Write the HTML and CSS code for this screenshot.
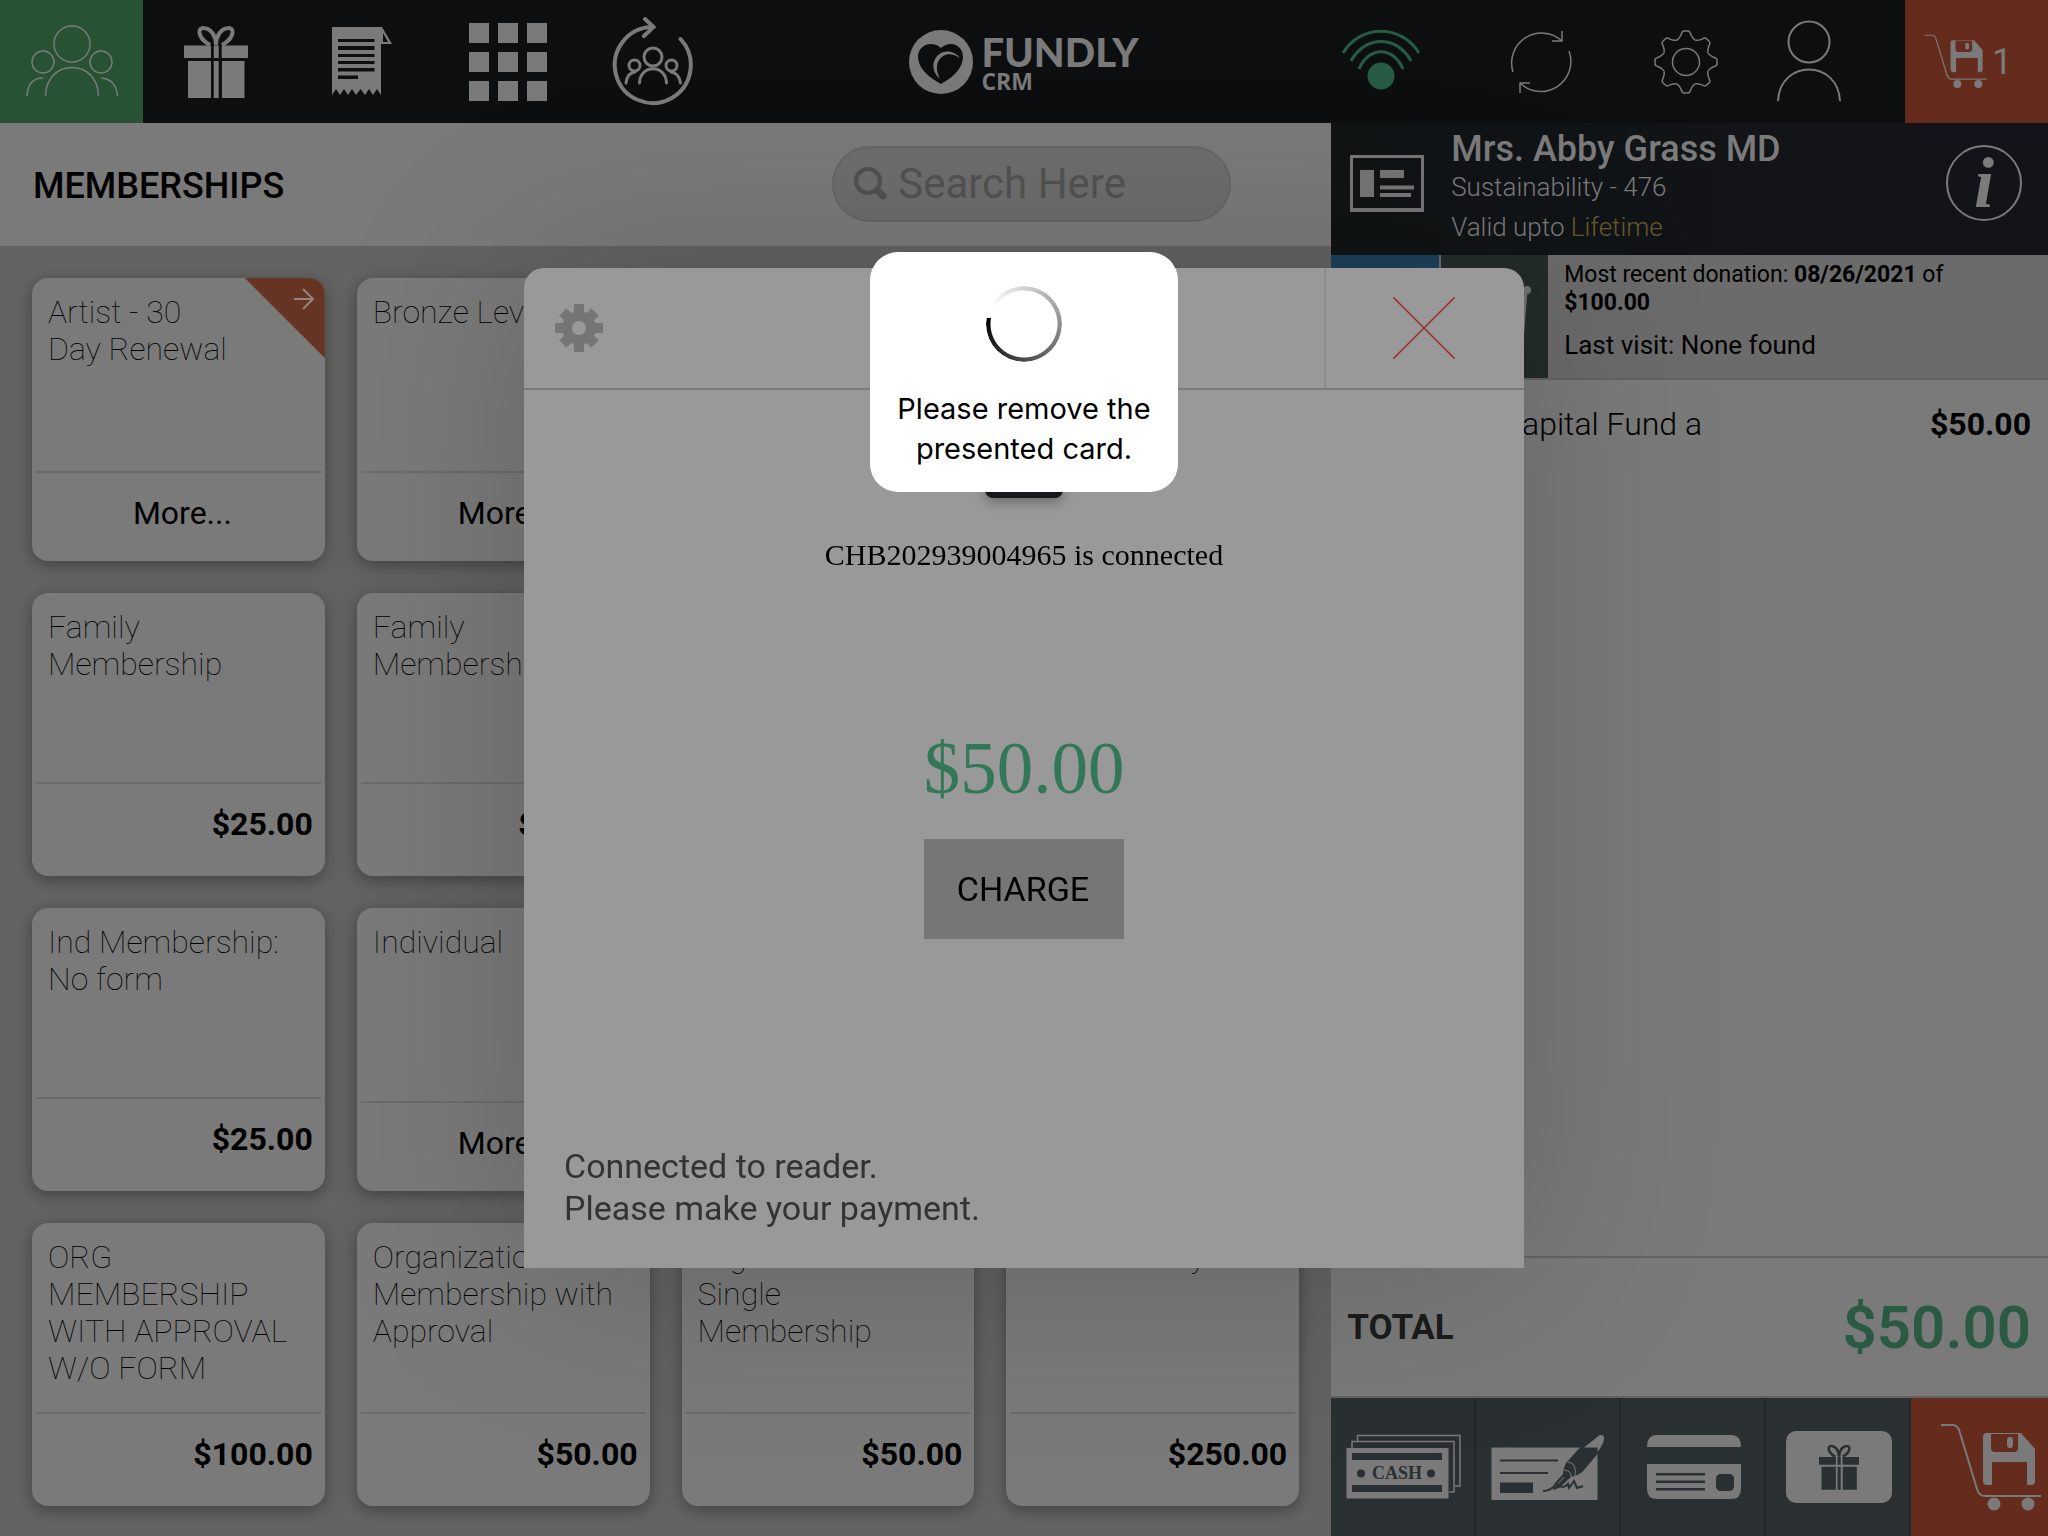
FILE: index.html
```html
<!DOCTYPE html>
<html lang="en">
<head>
<meta charset="utf-8">
<title>Fundly CRM - Memberships</title>
<link rel="stylesheet" href="styles.css">
</head>
<body>
<svg class="defs" aria-hidden="true">
  <symbol id="gift" viewBox="185 24 64 73">
    <path fill="currentColor" d="M185 44.500h27V57h-27zM214.700 44.500h5V57h-5zM222.700 44.500H249V57h-26.300zM189 60h23v37h-23zM214.700 60h5v37h-5zM223 60h22.500v37H223z"/>
    <path fill="none" stroke="currentColor" stroke-width="4" d="M211 44C197 36 199 26 205 27C213 28 217 36 217 44C217 36 221 28 229 27C235 26 237 36 223 44"/>
  </symbol>
  <symbol id="cart" viewBox="1941 1422 102 89">
    <path fill="none" stroke="currentColor" stroke-width="2" d="M1942 1424H1954Q1959 1424 1961 1432L1978 1488Q1980 1495 1986 1495H2042"/>
    <circle fill="currentColor" cx="1995" cy="1503" r="6.500"/><circle fill="currentColor" cx="2029" cy="1503" r="6.500"/>
    <path fill="currentColor" fill-rule="evenodd" d="M1988 1432H2022L2036 1448V1480Q2036 1484 2032 1484H2028V1461H1993V1484H1988Q1984 1484 1984 1480V1436Q1984 1432 1988 1432ZM1992 1433V1447Q1992 1451 1996 1451H2015Q2019 1451 2019 1447V1433Z"/>
    <rect fill="currentColor" x="2008" y="1436" width="6" height="11" rx="3"/>
  </symbol>
</svg>

<header class="topbar">
  <nav class="nav-left" aria-label="Main">
    <button class="nav-button active" aria-label="Members">
      <svg width="143" height="123" viewBox="0 0 143 123" class="line"><circle cx="72" cy="44" r="18"/><circle cx="43" cy="62" r="11"/><circle cx="101" cy="62" r="11"/><path d="M45.500 96C46 58 98 58 98.500 96M27 96Q28 78 43 78M101 78Q116 79 117.500 96"/></svg>
    </button>
    <button class="nav-button" aria-label="Gifts"><svg width="64" height="73"><use href="#gift"/></svg></button>
    <button class="nav-button" aria-label="Receipts">
      <svg width="60" height="70" viewBox="333 27 60 70"><path fill="currentColor" fill-rule="evenodd" d="M333 27H383L393 44H382V95L378 89L374 95L370 89L366 95L361.500 89L357 95L353 89L349 95L345 89L341 95L337 89L333 95ZM384 33V42H389ZM339 39V42H375.500V39ZM339 46V50H375.500V46ZM339 54V57H375.500V54ZM339 61V64H375.500V61ZM339 68V71.500H375.500V68ZM339 75.500V79H359V75.500Z"/></svg>
    </button>
    <button class="nav-button" aria-label="Categories">
      <svg width="78" height="78" viewBox="0 0 78 78"><path fill="currentColor" d="M0 0h20v20H0zM29 0h20v20H29zM58 0h20v20H58zM0 29h20v20H0zM29 29h20v20H29zM58 29h20v20H58zM0 58h20v20H0zM29 58h20v20H29zM58 58h20v20H58z"/></svg>
    </button>
    <button class="nav-button" aria-label="Renewals">
      <svg width="84" height="123" viewBox="612 0 84 123" class="line bold"><path d="M680.500 39A38 38 0 1 1 652 27M645 19L653.500 27L644 36"/><g stroke-width="3"><circle cx="653" cy="57" r="9"/><circle cx="634.500" cy="65.500" r="5.500"/><circle cx="671.500" cy="65.500" r="5.500"/><path d="M639.500 83C640 64 666 64 666.500 83M626 83Q627 73 635 72M671 72Q679 73 680.500 83"/></g></svg>
    </button>
  </nav>
  <div class="logo">
    <svg width="64" height="64" viewBox="0 0 64 64"><circle cx="32" cy="32" r="32" fill="#7a7a7a"/><path fill="#0c0e10" d="M32 18C24 10 9 14 9 27C10 41 22 48 32 54C42 48 53 41 54 27C54 14 40 10 32 18Z"/><path fill="#7a7a7a" d="M51 28C46 21 36 19 29 25C22 32 23 42 31 49C26 39 27 31 34 26C39 23 45 24 51 28Z"/></svg>
    <div class="logo-text"><span class="logo-name">FUNDLY</span><span class="logo-sub">CRM</span></div>
  </div>
  <div class="nav-right">
    <button class="nav-button wide" aria-label="Connection">
      <svg width="80" height="123" viewBox="1341 0 80 123"><circle cx="1381" cy="76" r="13.500" fill="#255c43"/><path fill="none" stroke="#255c43" stroke-width="3" d="M1343 53C1361 24 1401 24 1419 53M1351 61C1365 35 1397 35 1411 61M1359 69C1369 46 1393 46 1403 69"/></svg>
    </button>
    <button class="nav-button wide" aria-label="Sync">
      <svg width="64" height="123" viewBox="1509 0 64 123" class="line"><path d="M1513 72A30 30 0 0 1 1562 41M1562 31V41H1552M1569 51A30 30 0 0 1 1520 83M1520 93V83H1530"/></svg>
    </button>
    <button class="nav-button gear" aria-label="Settings">
      <svg width="66" height="66" viewBox="-33 -33 66 66" class="line"><circle r="13.500"/><path id="tooth" d="M-9-22Q-7-23-5-27Q-4-31-2-31H2Q4-31 5-27Q7-23 9-22"/><use href="#tooth" transform="rotate(45)"/><use href="#tooth" transform="rotate(90)"/><use href="#tooth" transform="rotate(135)"/><use href="#tooth" transform="rotate(180)"/><use href="#tooth" transform="rotate(225)"/><use href="#tooth" transform="rotate(270)"/><use href="#tooth" transform="rotate(315)"/></svg>
    </button>
    <button class="nav-button user" aria-label="Account">
      <svg width="66" height="123" viewBox="1776 0 66 123" class="line user-line"><circle cx="1809" cy="42" r="20.500"/><path d="M1778 101C1780 59 1838 59 1840 101"/></svg>
    </button>
    <button class="cart-button" aria-label="Cart, 1 item"><svg width="63" height="55"><use href="#cart"/></svg><span>1</span></button>
  </div>
</header>

<main class="content">
  <section class="catalog">
    <div class="catalog-head">
      <h1>MEMBERSHIPS</h1>
      <label class="search">
        <svg width="36" height="36" viewBox="0 0 36 36" fill="none" stroke="#51514f" aria-hidden="true"><circle cx="15" cy="15" r="12" stroke-width="4"/><path d="M24 24L30 30" stroke-width="7" stroke-linecap="round"/></svg>
        <input type="search" placeholder="Search Here" aria-label="Search Here">
      </label>
    </div>
    <div class="cards">
      <article class="card first renewal"><h2>Artist - 30 Day Renewal</h2><span class="ribbon"><svg width="22" height="24" viewBox="0 0 22 24" fill="none" stroke="#93857d" stroke-width="2"><path d="M1 12H20M10 2L20 12L10 22"/></svg></span><button class="more">More...</button></article>
      <article class="card"><h2>Bronze Level</h2><button class="more">More...</button></article>
      <article class="card first"><h2>Family Membership</h2><p class="price">$25.00</p></article>
      <article class="card"><h2>Family Membership</h2><p class="price">$100.00</p></article>
      <article class="card first"><h2>Ind Membership: No form</h2><p class="price">$25.00</p></article>
      <article class="card"><h2>Individual</h2><button class="more">More...</button></article>
      <article class="card first"><h2>ORG MEMBERSHIP WITH APPROVAL W/O FORM</h2><p class="price">$100.00</p></article>
      <article class="card"><h2>Organization Membership with Approval</h2><p class="price">$50.00</p></article>
      <article class="card"><h2>Organization Single Membership</h2><p class="price">$50.00</p></article>
      <article class="card"><h2>Sustainability</h2><p class="price">$250.00</p></article>
    </div>
  </section>

  <aside class="order">
    <div class="customer">
      <svg width="74" height="57" viewBox="1350 154 74 57"><path fill="#767676" fill-rule="evenodd" d="M1350 154H1424V211H1350ZM1353 157V207H1421V157ZM1360 169H1374V196H1360ZM1380 169H1404V177H1380ZM1380 184.500H1414V188.500H1380ZM1380 192H1411V196H1380Z"/></svg>
      <div class="customer-text">
        <p class="name">Mrs. Abby Grass MD</p>
        <p class="level">Sustainability - 476</p>
        <p class="valid">Valid upto <span>Lifetime</span></p>
      </div>
      <button class="info" aria-label="Customer information">i</button>
    </div>
    <div class="history">
      <div class="tab-blue"></div>
      <div class="tab-slate"><svg width="26" height="50" viewBox="0 0 26 50"><path d="M4 6H20L17 46H6Z" fill="none" stroke="#6f7272" stroke-width="3"/><circle cx="21" cy="6" r="4" fill="#6f7272"/></svg></div>
      <div class="history-text"><p>Most recent donation: <b>08/26/2021</b> of <b>$100.00</b></p><p class="visit">Last visit: None found</p></div>
    </div>
    <div class="items"><div class="item"><span>Capital Fund a</span><b>$50.00</b></div></div>
    <div class="total"><span>TOTAL</span><strong>$50.00</strong></div>
    <div class="payments">
      <button aria-label="Cash">
        <svg width="115" height="66" viewBox="1346 1434 115 66"><path fill="none" stroke="currentColor" stroke-width="1.500" d="M1352 1448V1441.500H1454V1492H1449M1357.500 1441V1435.500H1460V1486H1455"/><path fill="currentColor" d="M1346.500 1448h102v50.500h-102z"/><path fill="#2a2f32" d="M1352 1453h90v7h-90zM1352 1485h90v7h-90z"/><circle cx="1361" cy="1473.500" r="4" fill="#2a2f32"/><circle cx="1431" cy="1473.500" r="4" fill="#2a2f32"/><text x="1397" y="1479" text-anchor="middle" class="cash-text">CASH</text></svg>
      </button>
      <button aria-label="Check">
        <svg width="115" height="68" viewBox="1492 1433 115 68"><path fill="currentColor" d="M1492.500 1447.500h106V1500h-106z"/><path fill="#2a2f32" d="M1501 1459.500h58v2h-58zM1501 1472h48v2h-48zM1501 1482.500h33v10.500h-33z"/><path fill="#2a2f32" d="M1598 1436Q1604 1431 1606 1438Q1606 1444 1601 1451L1585 1470Q1581 1475 1572 1477L1560 1488L1554 1490L1556 1483L1564 1474Q1564 1468 1568 1462L1585 1443Z"/><path fill="currentColor" d="M1597 1438Q1602 1432 1605 1437Q1606 1442 1598.500 1452V1447.500H1585Z"/><path fill="none" stroke="currentColor" stroke-width="1" d="M1569 1462Q1578 1463 1576 1476M1565 1470Q1573 1471 1572 1477M1556 1487L1565 1477"/><path fill="none" stroke="#2a2f32" stroke-width="2" d="M1544 1491Q1552 1491 1557 1484Q1564 1490 1569 1484L1570 1488L1575 1481L1578 1488L1584 1486"/></svg>
      </button>
      <button aria-label="Credit card">
        <svg width="94" height="64" viewBox="0 0 94 64"><path fill="currentColor" fill-rule="evenodd" d="M10 0H84Q94 0 94 12H0Q0 0 10 0ZM0 29H94V54Q94 64 84 64H10Q0 64 0 54ZM9 38V40.500H58V38ZM9 45.500V48H58V45.500ZM9 53V55.500H58V53ZM74 39Q69 39 69 44V51Q69 56 74 56H82Q87 56 87 51V44Q87 39 82 39Z"/></svg>
      </button>
      <button aria-label="Gift card"><span class="gift-card"><svg width="40" height="46"><use href="#gift"/></svg></span></button>
      <button class="checkout" aria-label="Save cart"><svg width="102" height="89"><use href="#cart"/></svg></button>
    </div>
  </aside>
</main>

<div class="overlay">
  <div class="modal" role="dialog" aria-label="Card payment">
    <div class="modal-head">
      <button class="reader-settings" aria-label="Reader settings">
        <svg width="48" height="48" viewBox="-24 -24 48 48"><path fill="#757575" fill-rule="evenodd" d="M-17 0a17 17 0 1 0 34 0a17 17 0 1 0-34 0M-7 0a7 7 0 1 0 14 0a7 7 0 1 0-14 0"/><g fill="none" stroke="#757575" stroke-width="10" stroke-linecap="butt"><path d="M0-24V-13M0 24V13M-24 0H-13M24 0H13M-16-16L-9-9M16-16L9-9M-16 16L-9 9M16 16L9 9"/></g></svg>
      </button>
      <button class="close" aria-label="Close"><svg width="62" height="62" viewBox="0 0 62 62" fill="none" stroke="#952c24" stroke-width="1.500"><path d="M0 0L62 62M62 0L0 62"/></svg></button>
    </div>
    <div class="modal-body">
      <div class="reader"></div>
      <p class="reader-name">CHB202939004965 is connected</p>
      <p class="amount">$50.00</p>
      <button class="charge">CHARGE</button>
      <p class="status">Connected to reader.<br>Please make your payment.</p>
    </div>
  </div>
  <div class="toast" role="status"><div class="spinner"></div><p>Please remove the presented card.</p></div>
</div>
</body>
</html>
```
FILE: styles.css
```css
* { box-sizing: border-box; }
body { margin: 0; height: 100vh; overflow: hidden; display: flex; flex-direction: column; background: #636363; font-family: Roboto, "Liberation Sans", sans-serif; color: #000; }
h1, h2, p { margin: 0; }
button { border: 0; padding: 0; background: none; font: inherit; color: inherit; }
svg { display: block; }
.defs { position: absolute; width: 0; height: 0; }
.line { fill: none; stroke: #7a7a7a; stroke-width: 1.5; }
.line.bold { stroke-width: 4; stroke-linecap: round; }
.user-line { stroke-width: 2; }

.topbar { flex: none; height: 123px; display: grid; grid-template-columns: 1fr auto 1fr; background: #0c0e10; color: #7a7a7a; }
.nav-left, .nav-right { display: flex; }
.nav-right { justify-content: flex-end; }
.nav-button { width: 146px; display: flex; align-items: center; justify-content: center; }
.nav-button.active { width: 143px; background: #275233; }
.nav-button.wide { width: 160px; }
.nav-button.gear { width: 130px; }
.nav-button.user { width: 116px; margin-right: 38px; }
.cart-button { width: 143px; display: flex; align-items: center; gap: 5px; padding-left: 19px; background: #652b1d; font-size: 36px; font-weight: 400; }
.logo { display: flex; align-items: center; gap: 8px; }
.logo-text { display: flex; flex-direction: column; }
.logo-name { font: 900 40px/38px Lato, sans-serif; }
.logo-sub { font: 700 23px/20px "Open Sans", sans-serif; }

.content { flex: 1; min-height: 0; display: flex; }
.catalog { flex: 1; min-width: 0; }
.catalog-head { height: 123px; display: flex; align-items: center; justify-content: space-between; padding: 0 100px 0 33px; background: #7a7a7a; }
h1 { padding-top: 2px; font-size: 36px; font-weight: 500; }
.search { width: 399px; height: 76px; display: flex; align-items: center; gap: 9px; margin-bottom: 2px; padding-left: 19px; border: 2px solid #666665; border-radius: 38px; background: #6d6d6d; }
.search input { flex: 1; min-width: 0; border: 0; padding: 0; background: none; font: 400 42px Roboto, sans-serif; }
.search input::placeholder { color: #525351; opacity: 1; }
.cards { display: grid; grid-template-columns: repeat(4, 1fr); grid-auto-rows: 283px; gap: 32px; padding: 32px; }
.card { position: relative; display: flex; flex-direction: column; border-radius: 16px; background: #7a7a7a; box-shadow: 0 4px 16px rgba(0, 0, 0, .35); }
.card.first { grid-column: 1; }
.card h2 { flex: 1; padding: 16px 16px 0; font-size: 32px; line-height: 37px; font-weight: 100; }
.card.renewal h2 { padding-right: 90px; }
.price, .more { margin: 0 4px; border-top: 2px solid #6c6c6c; font-size: 32px; }
.price { height: 94px; padding-right: 8px; line-height: 80px; font-weight: 700; text-align: right; }
.more { height: 90px; padding: 0 0 8px 8px; }
.ribbon { position: absolute; top: 0; right: 0; width: 80px; height: 80px; padding: 9px 0 0 48px; border-top-right-radius: 16px; background: #663422; clip-path: polygon(0 0, 100% 0, 100% 100%); }

.order { width: 35%; display: flex; flex-direction: column; background: #7a7a7a; }
.customer { height: 132px; display: flex; align-items: center; padding: 0 26px 12px 19px; background: linear-gradient(90deg, #101415, #13141a); color: #7b7b7b; }
.customer-text { flex: 1; align-self: flex-start; padding: 5px 0 0 27px; font-size: 26px; font-weight: 300; }
.name { font-size: 36px; line-height: 42px; font-weight: 500; }
.level { line-height: 35px; }
.valid { line-height: 44px; }
.valid span { color: #665a2c; }
.info { width: 76px; height: 76px; border: 2px solid #7a7a7a; border-radius: 50%; font: italic 700 72px/60px "Liberation Serif", serif; }
.history { height: 125px; display: flex; border-bottom: 2px solid #636363; background: #6b6b6b; }
.tab-blue { width: 108px; background: #1d425b; }
.tab-slate { width: 109px; padding: 29px 0 0 65px; border-left: 2px solid #6b6b6b; background: #232b2b; }
.history-text { flex: 1; padding: 6px 80px 0 16px; font-size: 23px; line-height: 28px; }
.visit { margin-top: 14px; font-size: 26px; }
.items { flex: 1; }
.item { display: flex; justify-content: space-between; padding: 0 17px 0 170px; font-size: 32px; line-height: 88px; font-weight: 300; }
.item b { font-weight: 700; }
.total { height: 142px; display: flex; align-items: center; justify-content: space-between; padding: 0 17px 0 16px; border: solid #636363; border-width: 2px 0; font-size: 35px; font-weight: 700; color: #1b1c1b; }
.total strong { font-size: 60px; font-weight: 600; color: #2a5a43; }
.payments { height: 138px; display: flex; background: #2a2f32; color: #7a7a7a; }
.payments button { width: 145px; display: flex; align-items: center; justify-content: center; padding-left: 2px; border-right: 2px solid #22272a; }
.payments .checkout { flex: 1; width: auto; border: 0; padding-left: 22px; background: #652b1d; }
.cash-text { font: 700 18px "Liberation Serif", serif; fill: #2a2f32; }
.gift-card { width: 106px; height: 72px; display: flex; align-items: center; justify-content: center; border-radius: 10px; background: #7a7a7a; color: #2a2f32; }

.overlay { position: fixed; inset: 0; display: flex; align-items: center; justify-content: center; }
.modal { width: 1000px; height: 1000px; display: flex; flex-direction: column; border-radius: 20px 20px 0 0; background: #999; box-shadow: 0 0 200px rgba(0, 0, 0, .18); }
.modal-head { height: 122px; display: flex; justify-content: space-between; border-bottom: 2px solid #7b7b7b; }
.reader-settings { padding: 0 31px; }
.close { width: 200px; display: flex; align-items: center; justify-content: center; padding-right: 2px; border-left: 2px solid #8c8c8c; }
.modal-body { flex: 1; display: flex; flex-direction: column; align-items: center; }
.reader { width: 78px; height: 108px; border-radius: 8px; background: #17171b; box-shadow: 0 4px 12px rgba(0, 0, 0, .3); }
.reader-name { margin-top: 39px; font: 30px/36px "Liberation Serif", serif; }
.amount { margin-top: 154px; font: 73px/84px "Liberation Serif", serif; color: #327758; }
.charge { width: 200px; height: 100px; margin-top: 28px; padding-right: 2px; background: #767676; font-size: 34px; }
.status { align-self: stretch; margin-top: auto; padding: 0 40px 39px; font-size: 34px; line-height: 42px; color: #333; }
.toast { position: absolute; top: 252px; width: 308px; height: 240px; padding: 34px 24px 0; border-radius: 28px; background: #fff; text-align: center; font: 29px/40px Inter, sans-serif; }
.spinner { width: 76px; height: 76px; margin: 0 auto 27px; border-radius: 50%; background: conic-gradient(from 280deg, #fff 0deg, #fff 20deg, #000 360deg); mask: radial-gradient(circle closest-side, transparent 33px, #000 34px); }
```
